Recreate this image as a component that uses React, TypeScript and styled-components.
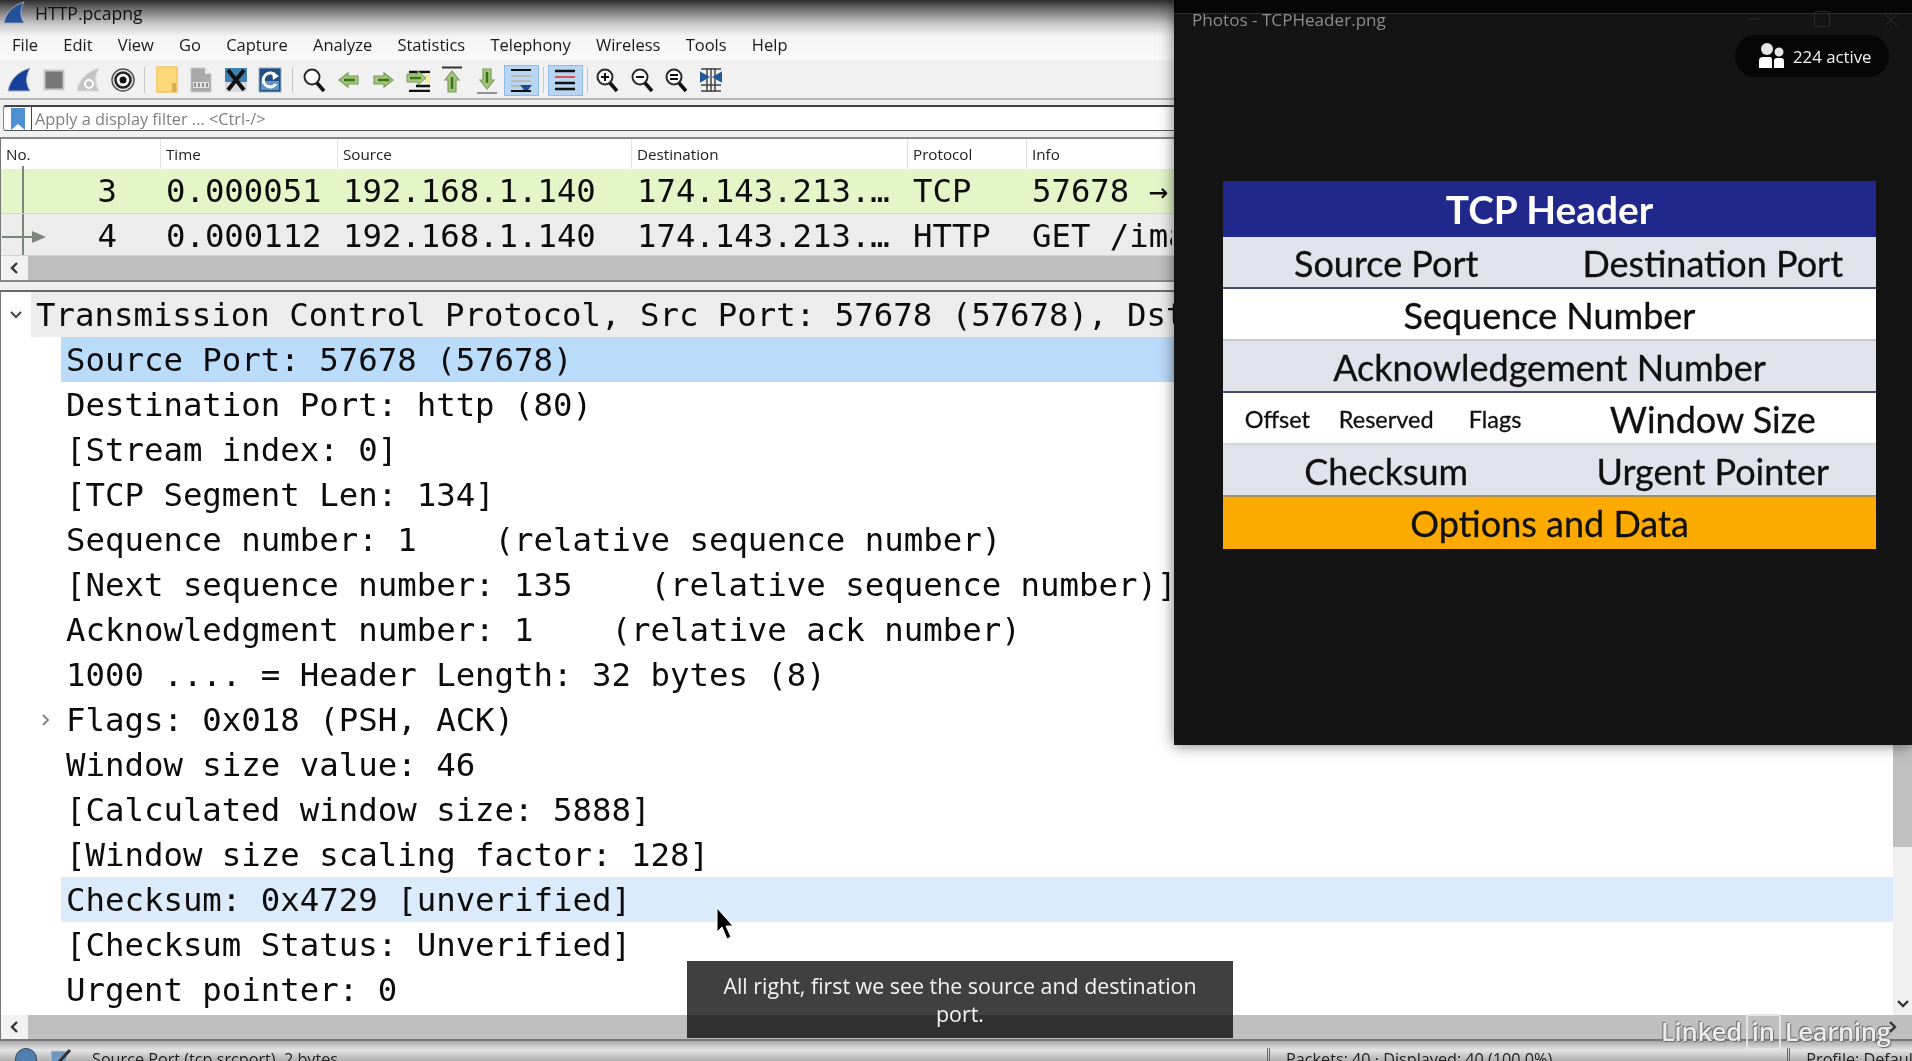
import styled, { createGlobalStyle } from "styled-components";
import { Minus, Square, X } from "lucide-react";

const GlobalStyle = createGlobalStyle`
  html, body {
    margin: 0;
    padding: 0;
    background: #fff;
    overflow: hidden;
  }
`;

const MENU = ["File", "Edit", "View", "Go", "Capture", "Analyze", "Statistics", "Telephony", "Wireless", "Tools", "Help"];
const COLUMNS = ["No.", "Time", "Source", "Destination", "Protocol", "Info"];

const TREE = [
  { text: "Transmission Control Protocol, Src Port: 57678 (57678), Dst", root: true, arrow: "open", tone: "root" },
  { text: "Source Port: 57678 (57678)", tone: "selected" },
  { text: "Destination Port: http (80)" },
  { text: "[Stream index: 0]" },
  { text: "[TCP Segment Len: 134]" },
  { text: "Sequence number: 1    (relative sequence number)" },
  { text: "[Next sequence number: 135    (relative sequence number)]" },
  { text: "Acknowledgment number: 1    (relative ack number)" },
  { text: "1000 .... = Header Length: 32 bytes (8)" },
  { text: "Flags: 0x018 (PSH, ACK)", arrow: "closed" },
  { text: "Window size value: 46" },
  { text: "[Calculated window size: 5888]" },
  { text: "[Window size scaling factor: 128]" },
  { text: "Checksum: 0x4729 [unverified]", tone: "related" },
  { text: "[Checksum Status: Unverified]" },
  { text: "Urgent pointer: 0" },
];

const Fin = ({ fill }: { fill: string }) => (
  <svg width="24" height="26" viewBox="0 0 24 26">
    <path d="M1 24C3 13 10 5 23 1C19 8 18 16 23 24Z" fill={fill} stroke="#a9b2bd" strokeWidth="1" />
  </svg>
);

const StopIcon = () => (
  <svg width="24" height="26" viewBox="0 0 24 26">
    <rect x="2.5" y="3.5" width="19" height="19" fill="#777" stroke="#c9c9c9" strokeWidth="2" />
  </svg>
);

const RestartIcon = () => (
  <svg width="24" height="26" viewBox="0 0 24 26">
    <path d="M1 24C3 13 10 5 23 1C19 8 18 16 23 24Z" fill="#c4c4c4" stroke="#ddd" strokeWidth="1" />
    <circle cx="13" cy="17" r="4" fill="none" stroke="#fff" strokeWidth="2" />
  </svg>
);

const OptionsIcon = () => (
  <svg width="26" height="26" viewBox="0 0 26 26">
    <circle cx="13" cy="13" r="11" fill="#e8e8e8" stroke="#555" strokeWidth="1.5" />
    <circle cx="13" cy="13" r="7.5" fill="#fff" stroke="#222" strokeWidth="2.5" />
    <circle cx="13" cy="13" r="3.5" fill="#111" />
  </svg>
);

const FolderIcon = () => (
  <svg width="22" height="28" viewBox="0 0 22 28">
    <rect x="1" y="1" width="20" height="25" fill="#fdd978" stroke="#f4c55f" strokeWidth="1.5" />
    <rect x="16" y="17" width="4" height="9" fill="#d9ad56" />
  </svg>
);

const SaveIcon = () => (
  <svg width="24" height="26" viewBox="0 0 24 26">
    <path d="M2 1H16L22 7V25H2Z" fill="#a9a9a9" stroke="#c8c8c8" />
    <path d="M16 1V7H22Z" fill="#e8e8e8" />
    <rect x="4" y="15" width="16" height="6" fill="#e2e2e2" />
    <path d="M6 16V20M10 16V20M14 16V20M18 16V20" stroke="#777" strokeWidth="1.5" />
  </svg>
);

const CloseFileIcon = () => (
  <svg width="24" height="26" viewBox="0 0 24 26">
    <rect x="1" y="1" width="22" height="24" fill="#3d7fae" />
    <rect x="1" y="15" width="22" height="10" fill="#d8d8d8" />
    <path d="M4 3L20 23M20 3L4 23" stroke="#111" strokeWidth="4" />
  </svg>
);

const ReloadIcon = () => (
  <svg width="24" height="26" viewBox="0 0 24 26">
    <rect x="1" y="1" width="22" height="24" fill="#1e4f80" stroke="#9bb2c8" />
    <rect x="3" y="14" width="18" height="9" fill="#5f95c4" />
    <path d="M18 9A7 7 0 1 0 18 17" fill="none" stroke="#fff" strokeWidth="3" />
    <path d="M14 5L21 9L15 13Z" fill="#fff" />
  </svg>
);

const Glass = ({ mark }: { mark?: string }) => (
  <svg width="24" height="26" viewBox="0 0 24 26">
    <circle cx="10" cy="10" r="7.5" fill="#fff" stroke="#2a2a2a" strokeWidth="2" />
    <path d="M15 16L22 24" stroke="#111" strokeWidth="3.5" />
    {mark && <path d={mark} stroke="#111" strokeWidth="2" fill="none" />}
  </svg>
);

const ARROW_FILL = "#a4c67a";
const ARROW_EDGE = "#7d9a60";
const ARROW_CORE = "#3f7318";

const ArrowSide = ({ flip }: { flip?: boolean }) => (
  <svg width="22" height="18" viewBox="0 0 22 18">
    <path
      d={flip ? "M21 9L12 2V5H2V13H12V16Z" : "M1 9L10 2V5H20V13H10V16Z"}
      fill={ARROW_FILL}
      stroke={ARROW_EDGE}
      strokeWidth="1.2"
    />
    <path d="M6 9H17" stroke={ARROW_CORE} strokeWidth="2.5" />
  </svg>
);

const JumpIcon = () => (
  <svg width="24" height="24" viewBox="0 0 24 24">
    <path d="M3 4H24M10 18H24M3 23H24" stroke="#111" strokeWidth="2.5" />
    <rect x="19" y="5" width="5" height="10" fill="#f6e8a8" />
    <path d="M20 10L12 3V6H1V14H12V17Z" fill={ARROW_FILL} stroke={ARROW_EDGE} />
    <path d="M4 10H15" stroke={ARROW_CORE} strokeWidth="2.5" />
  </svg>
);

const EdgeArrow = ({ down }: { down?: boolean }) => (
  <svg width="22" height="28" viewBox="0 0 22 28">
    {down ? (
      <>
        <path d="M1 27H21" stroke="#333" strokeWidth="1" />
        <path d="M11 23L4 14H7V3H15V14H18Z" fill={ARROW_FILL} stroke={ARROW_EDGE} strokeWidth="1.2" />
        <path d="M11 6V17" stroke={ARROW_CORE} strokeWidth="2.5" />
      </>
    ) : (
      <>
        <path d="M1 1.5H21" stroke="#333" strokeWidth="2" />
        <path d="M11 5L18 14H15V26H7V14H4Z" fill={ARROW_FILL} stroke={ARROW_EDGE} strokeWidth="1.2" />
        <path d="M11 11V23" stroke={ARROW_CORE} strokeWidth="2.5" />
      </>
    )}
  </svg>
);

const AutoScrollIcon = () => (
  <svg width="24" height="24" viewBox="0 0 24 24">
    <path d="M2 2H22M2 23H22" stroke="#111" strokeWidth="2" />
    <path d="M2 8H22M2 13H22M2 18H22" stroke="#b8bcb8" strokeWidth="2" />
    <path d="M11 17H23L19 22H15Z" fill="#1f4d8c" />
  </svg>
);

const ColorizeIcon = () => (
  <svg width="24" height="24" viewBox="0 0 24 24">
    <path d="M2 3H22M2 21H22M2 15H22" stroke="#111" strokeWidth="2.5" />
    <path d="M2 9H22" stroke="#d9534f" strokeWidth="2" />
  </svg>
);

const ResizeIcon = () => (
  <svg width="24" height="26" viewBox="0 0 24 26">
    <path d="M2 2H22M2 24H22M2 18H22M12 1V25M8 1V25M16 1V25" stroke="#444" strokeWidth="1.5" />
    <path d="M2 6L9 10L2 14ZM22 6L15 10L22 14Z" fill="#1f5a99" stroke="#1f5a99" strokeWidth="2" />
  </svg>
);

const PeopleIcon = () => (
  <svg width="25" height="26" viewBox="0 0 25 26">
    <circle cx="8" cy="6" r="6" fill="#e6e6e6" />
    <circle cx="20" cy="9" r="4.5" fill="#e6e6e6" />
    <path d="M0 25V18Q0 14 4 14H11Q13 14 13 18V25Z" fill="#fff" />
    <path d="M15 25V18Q15 15 18 15H22Q25 15 25 18V25Z" fill="#fff" />
  </svg>
);

const Expander = ({ open }: { open: boolean }) => (
  <svg width="12" height="12" viewBox="0 0 12 12">
    <path d={open ? "M1 3L6 8L11 3" : "M3 1L8 6L3 11"} fill="none" stroke={open ? "#444" : "#888"} strokeWidth="2" />
  </svg>
);

const Chevron = ({ dir }: { dir: "left" | "right" | "down" }) => (
  <svg width="12" height="12" viewBox="0 0 12 12">
    <path
      d={dir === "left" ? "M8 1L3 6L8 11" : dir === "right" ? "M4 1L9 6L4 11" : "M1 4L6 9L11 4"}
      fill="none"
      stroke="#333"
      strokeWidth="2.4"
    />
  </svg>
);

const App = () => {
  return (
    <Page>
      <GlobalStyle />
      <TopBars>
        <TitleRow>
          <Fin fill="#24509c" />
          <span>HTTP.pcapng</span>
        </TitleRow>
        <MenuRow>
          {MENU.map((m) => (
            <span key={m}>{m}</span>
          ))}
        </MenuRow>
      </TopBars>

      <Toolbar>
        <ToolButton><Fin fill="#17409c" /></ToolButton>
        <ToolButton><StopIcon /></ToolButton>
        <ToolButton><RestartIcon /></ToolButton>
        <ToolButton><OptionsIcon /></ToolButton>
        <ToolSep />
        <ToolButton><FolderIcon /></ToolButton>
        <ToolButton><SaveIcon /></ToolButton>
        <ToolButton><CloseFileIcon /></ToolButton>
        <ToolButton><ReloadIcon /></ToolButton>
        <ToolSep />
        <ToolButton><Glass /></ToolButton>
        <ToolButton><ArrowSide /></ToolButton>
        <ToolButton><ArrowSide flip /></ToolButton>
        <ToolButton><JumpIcon /></ToolButton>
        <ToolButton><EdgeArrow /></ToolButton>
        <ToolButton><EdgeArrow down /></ToolButton>
        <ToolButton $active><AutoScrollIcon /></ToolButton>
        <ToolSep />
        <ToolButton $active><ColorizeIcon /></ToolButton>
        <ToolSep $narrow />
        <ToolButton><Glass mark="M6 10H14M10 6V14" /></ToolButton>
        <ToolButton><Glass mark="M6 10H14" /></ToolButton>
        <ToolButton><Glass mark="M6 8H14M6 12H14" /></ToolButton>
        <ToolButton><ResizeIcon /></ToolButton>
      </Toolbar>

      <FilterStrip>
        <FilterBar>
          <BookmarkCell>
            <svg width="14" height="22" viewBox="0 0 14 22">
              <path d="M0 0H14V22L7 16L0 22Z" fill="#4d8fd0" />
            </svg>
          </BookmarkCell>
          <FilterHint>Apply a display filter ... &lt;Ctrl-/&gt;</FilterHint>
        </FilterBar>
      </FilterStrip>

      <PacketPane>
        <PacketHeader>
          {COLUMNS.map((c) => (
            <HeaderCell key={c}>{c}</HeaderCell>
          ))}
        </PacketHeader>
        <PacketRow $bg="#e4f6c8" $h={45}>
          <NumberCell>
            <Gutter />
            3
          </NumberCell>
          <PacketCell>0.000051</PacketCell>
          <PacketCell>192.168.1.140</PacketCell>
          <PacketCell>174.143.213.…</PacketCell>
          <PacketCell>TCP</PacketCell>
          <PacketCell>57678 →</PacketCell>
        </PacketRow>
        <PacketRow $bg="#ececec" $h={42} $drop={3}>
          <NumberCell>
            <Gutter />
            <RowArrow viewBox="0 0 44 12" width="44" height="12">
              <path d="M0 6H30" stroke="#7b857b" strokeWidth="2" />
              <path d="M30 0L44 6L30 12Z" fill="#7b857b" />
            </RowArrow>
            4
          </NumberCell>
          <PacketCell>0.000112</PacketCell>
          <PacketCell>192.168.1.140</PacketCell>
          <PacketCell>174.143.213.…</PacketCell>
          <PacketCell>HTTP</PacketCell>
          <PacketCell>GET /ima</PacketCell>
        </PacketRow>
        <HScroll>
          <ScrollButton><Chevron dir="left" /></ScrollButton>
        </HScroll>
      </PacketPane>

      <DetailPane>
        <DetailBody>
          <Tree>
            {TREE.map((row) => (
              <TreeRow key={row.text}>
                <TreeGutter $root={!!row.root}>
                  {row.arrow && <Expander open={row.arrow === "open"} />}
                </TreeGutter>
                <TreeLine $tone={row.tone}>
                  <TreeText $root={!!row.root}>{row.text}</TreeText>
                </TreeLine>
              </TreeRow>
            ))}
          </Tree>
          <VScroll>
            <VThumb />
            <VArrow><Chevron dir="down" /></VArrow>
          </VScroll>
        </DetailBody>
        <HScroll>
          <ScrollButton><Chevron dir="left" /></ScrollButton>
          <ScrollEnd><Chevron dir="right" /></ScrollEnd>
        </HScroll>
      </DetailPane>

      <StatusBar>
        <StatusDot />
        <svg width="22" height="22" viewBox="0 0 22 22">
          <rect x="1" y="3" width="16" height="18" fill="#6d97bf" stroke="#ccc" />
          <path d="M8 15L20 2" stroke="#333" strokeWidth="3" />
        </svg>
        <StatusText>Source Port (tcp.srcport), 2 bytes</StatusText>
        <StatusPackets>Packets: 40 · Displayed: 40 (100.0%)</StatusPackets>
        <StatusProfile>Profile: Default</StatusProfile>
      </StatusBar>

      <PhotoWindow>
        <WindowTop>
          <WindowTitle>Photos - TCPHeader.png</WindowTitle>
          <WindowControls>
            <Minus size={20} strokeWidth={1} />
            <Square size={20} strokeWidth={1} />
            <X size={22} strokeWidth={1} />
          </WindowControls>
        </WindowTop>
        <ActiveBadge>
          <PeopleIcon />
          224 active
        </ActiveBadge>
        <HeaderTable>
          <TableTitle>TCP Header</TableTitle>
          <TableRow $bg="#e0e2ec" $line="#4a4a78">
            <HalfCell>Source Port</HalfCell>
            <HalfCell>Destination Port</HalfCell>
          </TableRow>
          <TableRow $bg="#fff" $line="#c4c6d2">
            <WideCell>Sequence Number</WideCell>
          </TableRow>
          <TableRow $bg="#e0e2ec" $line="#4a4a78">
            <WideCell>Acknowledgement Number</WideCell>
          </TableRow>
          <TableRow $bg="#fff" $line="#d4d6de">
            <SmallCell>Offset</SmallCell>
            <SmallCell>Reserved</SmallCell>
            <SmallCell>Flags</SmallCell>
            <HalfCell>Window Size</HalfCell>
          </TableRow>
          <TableRow $bg="#e0e2ec" $line="#a89060">
            <HalfCell>Checksum</HalfCell>
            <HalfCell>Urgent Pointer</HalfCell>
          </TableRow>
          <TableRow $bg="#fdaa00" $line="#fdaa00">
            <WideCell>Options and Data</WideCell>
          </TableRow>
        </HeaderTable>
      </PhotoWindow>

      <Caption>
        All right, first we see the source and destination
        <br />
        port.
      </Caption>

      <Cursor width="18" height="34" viewBox="0 0 18 34">
        <path d="M1 1V25L6 20L11 32L15 30L10 19H17Z" fill="#000" stroke="#fff" strokeWidth="1" />
      </Cursor>

      <Watermark>
        Linked<WatermarkBox>in</WatermarkBox>Learning
      </Watermark>
    </Page>
  );
};

const Page = styled.div`
  position: relative;
  width: 1912px;
  height: 1061px;
  overflow: hidden;
  display: flex;
  flex-direction: column;
  background: #f0f0f0;
  color: #111;
  font-family: "Open Sans", "Liberation Sans", sans-serif;
  filter: blur(0.4px);
`;

const TopBars = styled.div`
  height: 60px;
  flex: none;
  background: linear-gradient(#2c2c2c 0, #6e6e6e 9px, #c8c8c8 24px, #f4f4f4 36px, #fafafa 100%);
`;

const TitleRow = styled.div`
  height: 26px;
  display: flex;
  align-items: center;
  gap: 10px;
  padding-left: 3px;
  font-size: 17.6px;
  color: #111;
  svg {
    width: 22px;
    height: 24px;
  }
`;

const MenuRow = styled.div`
  height: 32px;
  padding-top: 2px;
  display: flex;
  align-items: center;
  gap: 25.2px;
  padding-left: 12px;
  font-size: 16.5px;
  color: #1a1a1a;
`;

const Toolbar = styled.div`
  height: 36px;
  flex: none;
  display: flex;
  align-items: center;
  padding: 2px 0 0 2px;
  background: #f1f1f1;
  border-bottom: 2px solid #b5b5b5;
`;

const ToolButton = styled.div<{ $active?: boolean }>`
  width: 34.5px;
  height: 31px;
  box-sizing: border-box;
  flex: none;
  display: flex;
  align-items: center;
  justify-content: center;
  background: ${(p) => (p.$active ? "#b8d6f4" : "transparent")};
  border: 1px solid ${(p) => (p.$active ? "#8fbce8" : "transparent")};
`;

const ToolSep = styled.div<{ $narrow?: boolean }>`
  width: ${(p) => (p.$narrow ? 7.5 : 9.5)}px;
  height: 26px;
  flex: none;
  &::after {
    content: "";
    display: block;
    width: 1px;
    height: 26px;
    margin-left: 4px;
    background: #c8c8c8;
  }
`;

const FilterStrip = styled.div`
  height: 37px;
  flex: none;
  box-sizing: border-box;
  padding: 5px 0 6px;
  background: #f0f0f0;
`;

const FilterBar = styled.div`
  height: 26px;
  box-sizing: border-box;
  display: flex;
  align-items: center;
  margin-left: 3px;
  background: #fff;
  border-top: 2px solid #444;
  border-bottom: 1px solid #555;
  border-left: 1px solid #888;
  border-radius: 3px 0 0 3px;
`;

const BookmarkCell = styled.div`
  width: 27px;
  height: 100%;
  flex: none;
  display: flex;
  align-items: center;
  justify-content: center;
  border-right: 1px solid #444;
`;

const FilterHint = styled.span`
  margin-left: 3px;
  font-size: 16.3px;
  color: #808080;
`;

const PacketPane = styled.div`
  height: 145px;
  flex: none;
  display: flex;
  flex-direction: column;
  border-left: 1px solid #777;
  border-top: 2px solid #888;
  border-bottom: 2px solid #888;
  box-sizing: border-box;
  background: #fff;
`;

// last track stops where the Photos window starts, so the cell clips there
const COLUMN_GRID = "159px 177px 294px 276px 119px 146px 1fr";

const PacketHeader = styled.div`
  height: 30px;
  flex: none;
  display: grid;
  grid-template-columns: ${COLUMN_GRID};
  align-items: stretch;
  background: #fff;
`;

const HeaderCell = styled.div`
  display: flex;
  align-items: center;
  padding-left: 5px;
  font-size: 15.2px;
  color: #222;
  border-left: 1px solid #e2e2e2;
  &:first-child {
    border-left: none;
  }
`;

const PacketRow = styled.div<{ $bg: string; $h: number; $drop?: number }>`
  height: ${(p) => p.$h}px;
  box-sizing: border-box;
  flex: none;
  display: grid;
  grid-template-columns: ${COLUMN_GRID};
  align-items: center;
  padding-top: ${(p) => p.$drop ?? 0}px;
  background: ${(p) => p.$bg};
  border-bottom: 1px solid #d6d6d6;
  font-family: "DejaVu Sans Mono", "Liberation Mono", monospace;
  font-size: 32.3px;
  color: #0c0c0c;
`;

const PacketCell = styled.div`
  padding-left: 6px;
  white-space: nowrap;
  overflow: hidden;
`;

const NumberCell = styled.div`
  position: relative;
  align-self: stretch;
  display: flex;
  align-items: center;
  justify-content: flex-end;
  padding-right: 43px;
`;

const Gutter = styled.span`
  position: absolute;
  left: 21px;
  top: -3px;
  bottom: 0;
  width: 2px;
  background: #7b857b;
`;

const RowArrow = styled.svg`
  position: absolute;
  left: 1px;
  top: 14px;
`;

const HScroll = styled.div`
  height: 24px;
  flex: none;
  display: flex;
  align-items: stretch;
  justify-content: space-between;
  background: #bfbfbf;
`;

const ScrollButton = styled.div`
  width: 27px;
  display: flex;
  align-items: center;
  justify-content: center;
  background: #f2f2f2;
`;

const ScrollEnd = styled.div`
  width: 40px;
  display: flex;
  align-items: center;
  justify-content: center;
`;

const DetailPane = styled.div`
  margin-top: 8px;
  height: 751px;
  flex: none;
  box-sizing: border-box;
  display: flex;
  flex-direction: column;
  border-top: 2px solid #6a6a6a;
  border-left: 1px solid #777;
  border-bottom: 2px solid #777;
  background: #fff;
`;

const DetailBody = styled.div`
  flex: 1;
  min-height: 0;
  display: flex;
`;

const Tree = styled.div`
  flex: 1;
  min-width: 0;
  overflow: hidden;
`;

const TreeRow = styled.div`
  height: 45px;
  display: flex;
  align-items: stretch;
`;

const TreeGutter = styled.div<{ $root: boolean }>`
  width: ${(p) => (p.$root ? 30 : 60)}px;
  flex: none;
  box-sizing: border-box;
  display: flex;
  align-items: center;
  justify-content: flex-end;
  padding-right: 9px;
`;

const TONES: Record<string, string> = {
  root: "#ececec",
  selected: "#bbdbfa",
  related: "#dbebfb",
};

const TreeLine = styled.div<{ $tone?: string }>`
  flex: 1;
  min-width: 0;
  display: flex;
  align-items: center;
  padding-left: 5px;
  background: ${(p) => (p.$tone ? TONES[p.$tone] : "transparent")};
`;

const TreeText = styled.span<{ $root: boolean }>`
  max-width: ${(p) => (p.$root ? 1138 : 1109)}px;
  white-space: pre;
  overflow: hidden;
  font-family: "DejaVu Sans Mono", "Liberation Mono", monospace;
  font-size: 32.37px;
  color: #0c0c0c;
`;

const VScroll = styled.div`
  width: 19px;
  flex: none;
  display: flex;
  flex-direction: column;
  background: #f0f0f0;
`;

const VThumb = styled.div`
  height: 555px;
  flex: none;
  background: #c0c0c0;
`;

const VArrow = styled.div`
  margin-top: auto;
  height: 24px;
  display: flex;
  align-items: center;
  justify-content: center;
`;

const StatusBar = styled.div`
  flex: 1;
  min-height: 0;
  display: flex;
  align-items: flex-start;
  gap: 13px;
  padding: 7px 0 0 15px;
  overflow: hidden;
  background: linear-gradient(#a9a9a9, #e4e4e4 45%, #b0b0b0);
  font-size: 16.2px;
  color: #222;
  & > * {
    flex: none;
  }
`;

const StatusDot = styled.span`
  width: 22px;
  height: 22px;
  border-radius: 50%;
  background: #4f7faf;
  border: 1px solid #345;
  box-sizing: border-box;
`;

const StatusText = styled.span`
  margin-left: 7px;
  white-space: nowrap;
`;

const StatusPackets = styled.span`
  margin-left: 916px;
  padding-left: 16px;
  border-left: 3px double #666;
  white-space: nowrap;
`;

const StatusProfile = styled.span`
  margin-left: 222px;
  padding-left: 16px;
  border-left: 3px double #666;
  white-space: nowrap;
`;

const PhotoWindow = styled.div`
  position: absolute;
  left: 1174px;
  top: 0;
  width: 738px;
  height: 745px;
  background: #141414;
  box-shadow: 0 0 14px rgba(0, 0, 0, 0.55);
`;

const WindowTop = styled.div`
  height: 28px;
  box-sizing: border-box;
  display: flex;
  align-items: center;
  justify-content: space-between;
  padding: 13px 10px 0 18px;
  background: linear-gradient(#050505 13px, #2e2e2e 13px, #2e2e2e 14px, #141414 14px);
`;

const WindowTitle = styled.span`
  font-size: 17.1px;
  line-height: 16px;
  margin-top: -2px;
  color: #8c8c8c;
`;

const WindowControls = styled.div`
  display: flex;
  gap: 48px;
  margin-top: -2px;
  color: #303030;
`;

const ActiveBadge = styled.div`
  position: absolute;
  right: 23px;
  top: 35px;
  width: 154px;
  height: 42px;
  box-sizing: border-box;
  display: flex;
  align-items: center;
  gap: 9px;
  padding-left: 24px;
  border-radius: 21px;
  background: #050505;
  font-size: 16.8px;
  color: #f2f2f2;
`;

const HeaderTable = styled.div`
  margin: 153px 36px 0 49px;
  display: flex;
  flex-direction: column;
  font-family: Lato, "Open Sans", sans-serif;
  color: #101010;
  -webkit-text-stroke: 0.3px #101010;
`;

const TableTitle = styled.div`
  height: 56px;
  display: flex;
  align-items: center;
  justify-content: center;
  background: #20288c;
  color: #fff;
  -webkit-text-stroke: 0;
  font-size: 38.8px;
  font-weight: 700;
`;

const TableRow = styled.div<{ $bg: string; $line: string }>`
  height: 52px;
  box-sizing: border-box;
  padding-top: 2px;
  display: grid;
  grid-template-columns: repeat(6, 1fr);
  align-items: center;
  background: ${(p) => p.$bg};
  border-bottom: 2px solid ${(p) => p.$line};
`;

const HalfCell = styled.div`
  grid-column: span 3;
  text-align: center;
  font-size: 36px;
`;

const WideCell = styled.div`
  grid-column: span 6;
  text-align: center;
  font-size: 36px;
`;

const SmallCell = styled.div`
  grid-column: span 1;
  text-align: center;
  white-space: nowrap;
  font-size: 23.5px;
`;

const Caption = styled.div`
  position: absolute;
  left: 687px;
  top: 961px;
  width: 546px;
  height: 77px;
  box-sizing: border-box;
  padding-top: 11px;
  text-align: center;
  background: rgba(0, 0, 0, 0.75);
  color: #f4f4f4;
  font-size: 21.4px;
  line-height: 28px;
`;

const Cursor = styled.svg`
  position: absolute;
  left: 716px;
  top: 907px;
`;

const Watermark = styled.div`
  position: absolute;
  left: 1661px;
  top: 1014px;
  display: flex;
  align-items: center;
  gap: 4px;
  font-family: "Open Sans", sans-serif;
  font-size: 25.6px;
  font-weight: 600;
  letter-spacing: -0.3px;
  line-height: 32px;
  color: #ececec;
  text-shadow: 1px 1px 1px #6a6a6a, -1px -1px 1px #6a6a6a;
`;

const WatermarkBox = styled.span`
  padding: 0 4px;
  border: 2px solid #e4e4e4;
  border-radius: 4px;
`;

export default App;
